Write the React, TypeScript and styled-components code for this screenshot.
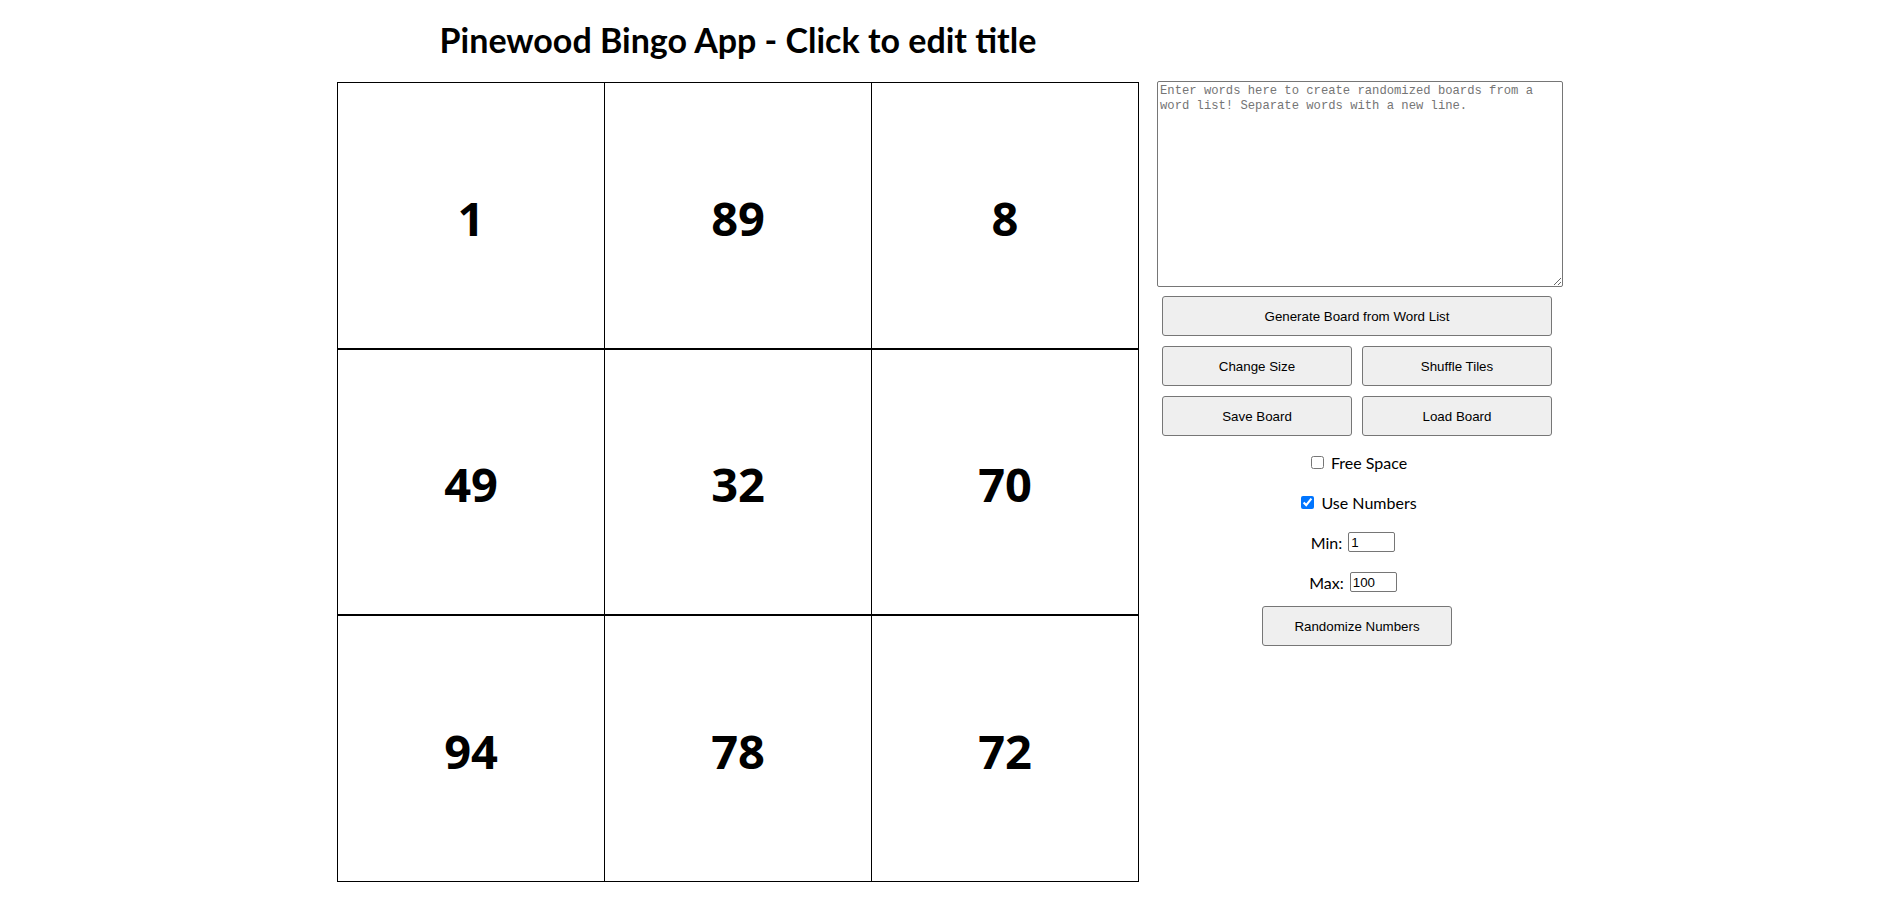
import React, { useState } from "react";
import styled, { createGlobalStyle } from "styled-components";

const GlobalStyle = createGlobalStyle`
  html, body {
    margin: 0;
    padding: 0;
    background: #ffffff;
  }
  body {
    font-family: "Lato", "Open Sans", sans-serif;
    color: #000000;
  }
`;

const Page = styled.div`
  display: grid;
  grid-template-columns: 802px 400px;
  grid-template-rows: auto auto;
  column-gap: 18px;
  justify-content: center;
  padding-right: 3px;
`;

const Title = styled.h1`
  grid-column: 1;
  grid-row: 1;
  margin: 0 0 22px 0;
  padding-top: 20px;
  font-family: "Lato", sans-serif;
  font-weight: 700;
  font-size: 34px;
  line-height: 40px;
  text-align: center;
  cursor: pointer;
`;

const Board = styled.div`
  grid-column: 1;
  grid-row: 2;
  box-sizing: border-box;
  width: 802px;
  height: 800px;
  display: grid;
  grid-template-columns: repeat(3, 1fr);
  grid-template-rows: repeat(3, 1fr);
  column-gap: 1px;
  row-gap: 2px;
  background: #000000;
  border: 1px solid #000000;
`;

const Cell = styled.div`
  background: #ffffff;
  display: flex;
  align-items: center;
  justify-content: center;
  padding-top: 5px;
  box-sizing: border-box;
  font-family: "Open Sans", sans-serif;
  font-weight: 700;
  font-size: 47px;
  cursor: pointer;
`;

const Panel = styled.div`
  grid-column: 2;
  grid-row: 2;
  width: 400px;
  display: flex;
  flex-direction: column;
  align-items: stretch;
  margin-top: -1px;
`;

const WordList = styled.textarea`
  box-sizing: border-box;
  width: 406px;
  height: 206px;
  margin: 0;
  padding: 2px;
  border: 1px solid #767676;
  border-radius: 2px;
  font-family: "Liberation Mono", "DejaVu Sans Mono", monospace;
  font-size: 12.2px;
  line-height: 14.7px;
  color: #000000;
  &::placeholder {
    color: #757575;
  }
`;

const ButtonGrid = styled.div`
  display: grid;
  grid-template-columns: 1fr 1fr;
  grid-auto-rows: 40px;
  gap: 10px;
  padding: 0 5px;
  margin-top: 9px;
`;

const Button = styled.button<{ $wide?: boolean }>`
  grid-column: ${(p) => (p.$wide ? "1 / span 2" : "auto")};
  box-sizing: border-box;
  height: 40px;
  margin: 0;
  padding: 0 6px;
  background: #efefef;
  border: 1px solid #767676;
  border-radius: 3px;
  font-family: "Liberation Sans", Arial, sans-serif;
  font-size: 13.333px;
  color: #000000;
  cursor: pointer;
`;

const Options = styled.div`
  display: flex;
  flex-direction: column;
  align-items: center;
  margin-top: 6px;
`;

const OptionRow = styled.label<{ $field?: boolean }>`
  height: 40px;
  display: flex;
  align-items: center;
  justify-content: center;
  white-space: pre;
  padding-right: ${(p) => (p.$field ? "8px" : "0")};
  font-family: "Lato", sans-serif;
  font-size: 16px;
`;

const Check = styled.input`
  width: 13px;
  height: 13px;
  margin: 3px 3px 3px 4px;
`;

const NumberInput = styled.input`
  box-sizing: border-box;
  width: 47px;
  height: 20px;
  margin: 0 0 0 6px;
  padding: 1px 2px;
  border: 1px solid #767676;
  border-radius: 2px;
  font-family: "Liberation Sans", Arial, sans-serif;
  font-size: 13.333px;
  color: #000000;
`;

const RandomizeButton = styled(Button)`
  width: 190px;
  margin-top: 4px;
`;

const numbers = [1, 89, 8, 49, 32, 70, 94, 78, 72];

export default function App() {
  const [freeSpace, setFreeSpace] = useState(false);
  const [useNumbers, setUseNumbers] = useState(true);
  const [min, setMin] = useState("1");
  const [max, setMax] = useState("100");

  return (
    <>
      <GlobalStyle />
      <Page>
        <Title>Pinewood Bingo App - Click to edit title</Title>
        <Board>
          {numbers.map((n, i) => (
            <Cell key={i}>{n}</Cell>
          ))}
        </Board>
        <Panel>
          <WordList placeholder="Enter words here to create randomized boards from a word list! Separate words with a new line." />
          <ButtonGrid>
            <Button $wide>Generate Board from Word List</Button>
            <Button>Change Size</Button>
            <Button>Shuffle Tiles</Button>
            <Button>Save Board</Button>
            <Button>Load Board</Button>
          </ButtonGrid>
          <Options>
            <OptionRow>
              <Check
                type="checkbox"
                checked={freeSpace}
                onChange={(e) => setFreeSpace(e.target.checked)}
              />
              {" Free Space"}
            </OptionRow>
            <OptionRow>
              <Check
                type="checkbox"
                checked={useNumbers}
                onChange={(e) => setUseNumbers(e.target.checked)}
              />
              {" Use Numbers"}
            </OptionRow>
            <OptionRow $field>
              {"Min:"}
              <NumberInput value={min} onChange={(e) => setMin(e.target.value)} />
            </OptionRow>
            <OptionRow $field>
              {"Max:"}
              <NumberInput value={max} onChange={(e) => setMax(e.target.value)} />
            </OptionRow>
            <RandomizeButton>Randomize Numbers</RandomizeButton>
          </Options>
        </Panel>
      </Page>
    </>
  );
}
